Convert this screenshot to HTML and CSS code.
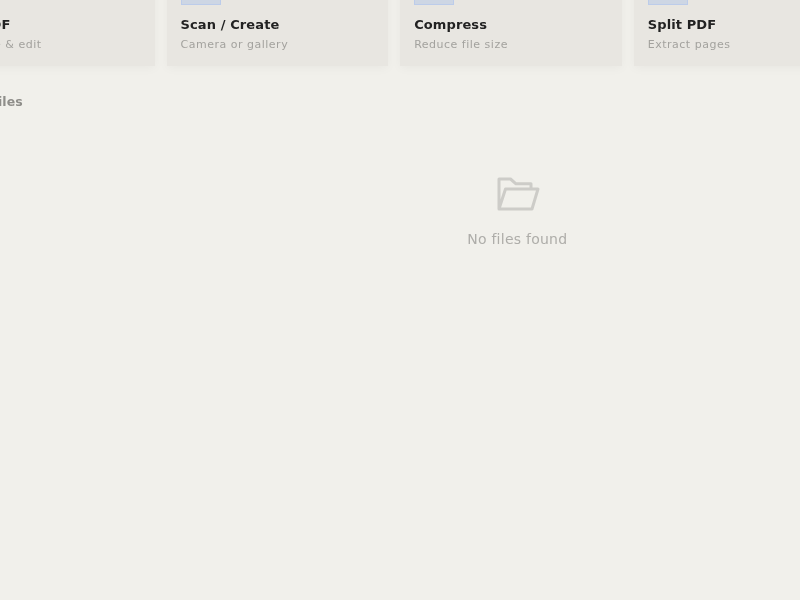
FILE: index.html
```
<!DOCTYPE html>
<html lang="en">
<head>
<meta charset="utf-8">
<title>Files</title>
<link rel="stylesheet" href="styles.css">
</head>
<body>
<main class="page">
  <section class="cards">
    <article class="card"><div class="thumb"></div><h3>Edit PDF</h3><p>Annotate &amp; edit</p></article>
    <article class="card"><div class="thumb"></div><h3>Scan / Create</h3><p>Camera or gallery</p></article>
    <article class="card"><div class="thumb"></div><h3>Compress</h3><p>Reduce file size</p></article>
    <article class="card"><div class="thumb"></div><h3>Split PDF</h3><p>Extract pages</p></article>
  </section>
  <h2 class="section-title">Saved Files</h2>
  <div class="empty">
    <svg class="folder" width="44" height="36" viewBox="0 0 44 36" fill="none" stroke="currentColor" stroke-width="3" stroke-linejoin="round"><path d="M3 33V3H14.5L20 7.8H35V13M3 33L9.5 13H42L36 33Z"/></svg>
    <p>No files found</p>
  </div>
</main>
</body>
</html>
```
FILE: styles.css
```
html, body { margin: 0; height: 100%; overflow: hidden; }
body { background: #f1f0eb; font-family: "DejaVu Sans", sans-serif; }
.page { margin-left: -66.8px; margin-top: -34px; width: 1167.6px; will-change: transform; }
.cards { display: grid; grid-template-columns: repeat(4, 221.6px); gap: 12px; }
.card { background: #e8e6e1; padding: 14px; height: 72px; box-shadow: 0 2px 10px rgba(0,0,0,.04); }
.thumb { width: 40px; height: 25px; background: #cdd6e4; border: 1px solid #bcccea; box-sizing: border-box; }
.card h3 { margin: 12px 0 0; font-size: 13px; line-height: 16px; font-weight: 700; color: #222; letter-spacing: .1px; }
.card p { margin: 5px 0 0; font-size: 11px; line-height: 14px; color: #a3a29e; letter-spacing: .5px; }
.section-title { margin: 27px 0 0 9.2px; font-size: 12.5px; line-height: 18px; font-weight: 700; color: #8f8e8a; }
.empty { display: flex; flex-direction: column; align-items: center; margin-top: 65px; color: #cdccc8; }
.folder { margin-left: 2px; }
.empty p { margin: 17px 0 0 1px; font-size: 14px; line-height: 20px; color: #aeada9; letter-spacing: .25px; }
```
